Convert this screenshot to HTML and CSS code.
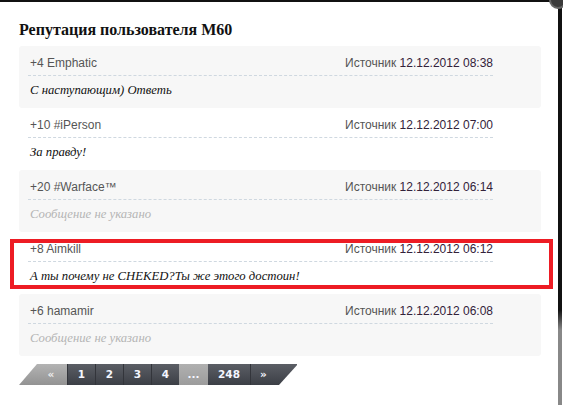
FILE: index.html
```html
<!DOCTYPE html>
<html lang="ru">
<head>
    <meta charset="UTF-8">
    <title>Репутация пользователя M60</title>
    <link rel="stylesheet" href="styles.css">
</head>
<body>
    <div class="frame">
        <div class="modal">
            <span class="close-btn"></span>
            <h2 class="modal-title">Репутация пользователя M60</h2>

            <div class="rep-list">
                <div class="rep-item shaded">
                    <div class="rep-head">
                        <span class="rep-user">+4 Emphatic</span>
                        <span class="rep-source">Источник <span class="rep-date">12.12.2012 08:38</span></span>
                    </div>
                    <div class="rep-text">С наступающим) Ответь</div>
                </div>

                <div class="rep-item">
                    <div class="rep-head">
                        <span class="rep-user">+10 #iPerson</span>
                        <span class="rep-source">Источник <span class="rep-date">12.12.2012 07:00</span></span>
                    </div>
                    <div class="rep-text">За правду!</div>
                </div>

                <div class="rep-item shaded">
                    <div class="rep-head">
                        <span class="rep-user">+20 #Warface™</span>
                        <span class="rep-source">Источник <span class="rep-date">12.12.2012 06:14</span></span>
                    </div>
                    <div class="rep-text empty">Сообщение не указано</div>
                </div>

                <div class="rep-item marked">
                    <div class="rep-head">
                        <span class="rep-user">+8 Aimkill</span>
                        <span class="rep-source">Источник <span class="rep-date">12.12.2012 06:12</span></span>
                    </div>
                    <div class="rep-text">А ты почему не CHEKED?Ты же этого достоин!</div>
                </div>

                <div class="rep-item shaded">
                    <div class="rep-head">
                        <span class="rep-user">+6 hamamir</span>
                        <span class="rep-source">Источник <span class="rep-date">12.12.2012 06:08</span></span>
                    </div>
                    <div class="rep-text empty">Сообщение не указано</div>
                </div>
            </div>

            <div class="pager">
                <a class="pg pg-prev">&laquo;</a>
                <a class="pg">1</a>
                <a class="pg">2</a>
                <a class="pg">3</a>
                <a class="pg">4</a>
                <a class="pg pg-gap">...</a>
                <a class="pg pg-wide">248</a>
                <a class="pg pg-next">&raquo;</a>
            </div>
        </div>
        <div class="edge"></div>
    </div>
</body>
</html>
```

FILE: styles.css
```css
* {
    margin: 0;
    padding: 0;
    box-sizing: border-box;
}

body {
    background: #fff;
    font-family: "Liberation Sans", Arial, sans-serif;
    width: 563px;
    height: 405px;
    overflow: hidden;
}

.frame {
    display: flex;
    height: 405px;
}

.modal {
    position: relative;
    width: 558px;
    border-top: 2px solid #111;
    padding: 18px 17px 0 19px;
}

.edge {
    width: 4px;
    margin-right: 1px;
    background: linear-gradient(#111 0, #111 310px, #888 330px, #888 100%);
}

/* close button of the popup, mostly outside the window */
.close-btn {
    position: absolute;
    top: -11px;
    right: -9px;
    width: 18px;
    height: 18px;
    border-radius: 50%;
    background: #3a3a3a;
    border: 2px solid #666;
}

.modal-title {
    font-family: "Liberation Serif", "Times New Roman", serif;
    font-size: 16px;
    font-weight: bold;
    line-height: 20px;
    color: #111;
    margin-bottom: 6px;
}

.rep-item {
    position: relative;
    height: 62px;
    padding: 9px 48px 0 9px;
    border-radius: 3px;
}

.rep-item.shaded {
    background: #f7f7f7;
}

.rep-item.marked::after {
    content: "";
    position: absolute;
    left: -9px;
    right: -12px;
    top: 7px;
    bottom: 5px;
    border: 4px solid #ed1c24;
}

.rep-head {
    display: flex;
    justify-content: space-between;
    font-size: 12px;
    line-height: 17px;
    padding: 0 0 3px 2px;
    border-bottom: 1px dashed #cfd8e0;
    color: #555;
}

.rep-date {
    color: #33223a;
}

.rep-text {
    font-family: "Liberation Serif", Georgia, serif;
    font-style: italic;
    font-size: 12.7px;
    line-height: 17px;
    margin-top: 6px;
    padding-left: 2px;
    color: #111;
}

.rep-text.empty {
    color: #b5b5b5;
}

.pager {
    display: flex;
    width: 279px;
    height: 21px;
    margin-top: 8px;
    clip-path: polygon(18px 0, 100% 0, calc(100% - 19px) 100%, 0 100%);
}

.pg {
    width: 28px;
    font-family: "DejaVu Sans", Verdana, sans-serif;
    font-size: 10.5px;
    font-weight: bold;
    line-height: 21px;
    text-align: center;
    color: #f4f6ff;
    background: linear-gradient(#5b5e65, #3c3f46);
    border-left: 1px solid #33353b;
}

.pg-prev {
    width: 48px;
    padding-left: 16px;
    border-left: none;
    color: #eee;
    background: linear-gradient(#b3b3b3, #939393);
}

.pg-gap {
    width: 29px;
    border-left: none;
    background: linear-gradient(#b0b0b0, #9c9c9c);
}

.pg-wide {
    width: 42px;
    border-left: none;
}

.pg-next {
    width: 47px;
    text-align: left;
    padding-left: 9px;
}
```
